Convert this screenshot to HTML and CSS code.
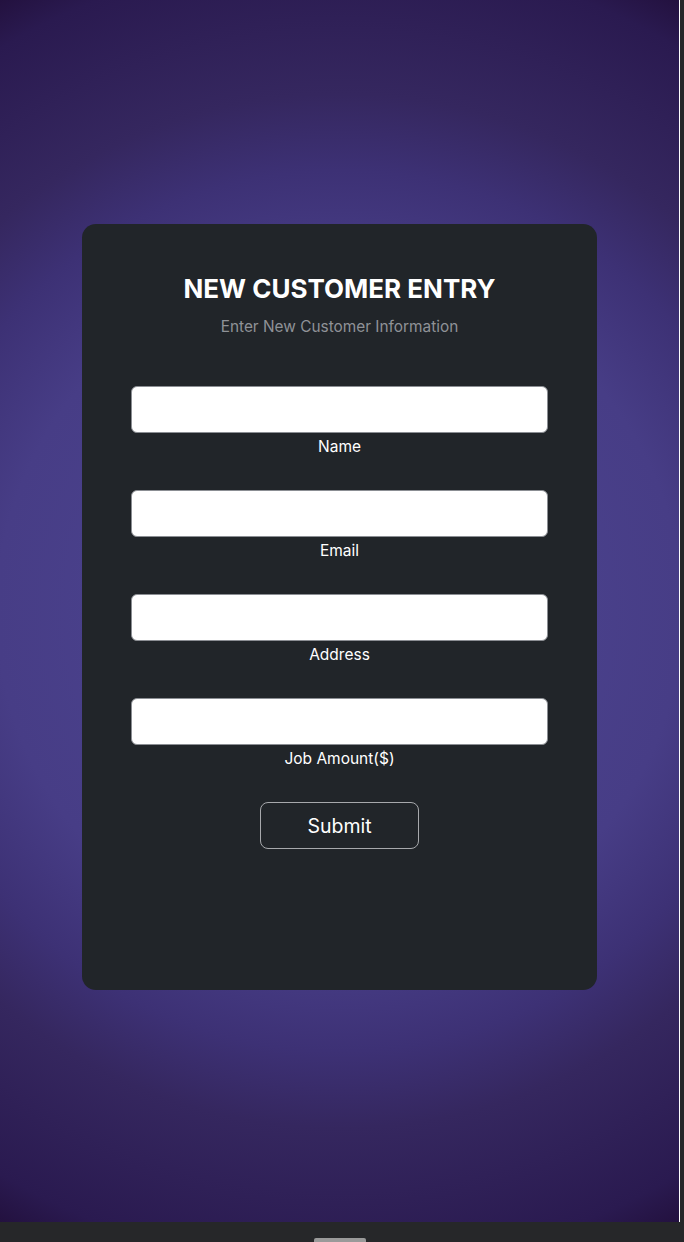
FILE: index.html
```html
<!DOCTYPE html>
<html lang="en">
<head>
<meta charset="utf-8">
<title>New Customer Entry</title>
<link rel="stylesheet" href="styles.css">
</head>
<body>
<div class="window">
  <main class="stage">
    <section class="card">
      <h1 class="title">NEW CUSTOMER ENTRY</h1>
      <p class="subtitle">Enter New Customer Information</p>
      <form class="form">
        <div class="field">
          <input class="input" type="text" id="name">
          <label class="label" for="name">Name</label>
        </div>
        <div class="field">
          <input class="input" type="text" id="email">
          <label class="label" for="email">Email</label>
        </div>
        <div class="field">
          <input class="input" type="text" id="address">
          <label class="label" for="address">Address</label>
        </div>
        <div class="field">
          <input class="input" type="text" id="amount">
          <label class="label" for="amount">Job Amount($)</label>
        </div>
        <button class="submit" type="button">Submit</button>
      </form>
    </section>
  </main>
  <div class="edge"></div>
</div>
<div class="bottombar"><div class="handle"></div></div>
</body>
</html>
```

FILE: styles.css
```css
* { box-sizing: border-box; }
html, body { margin: 0; padding: 0; }
body {
  width: 684px;
  height: 1242px;
  overflow: hidden;
  font-family: Inter, "Noto Sans", "Liberation Sans", sans-serif;
  background: #262729;
  display: flex;
  flex-direction: column;
}
.window {
  height: 1222px;
  display: flex;
}
.stage {
  width: 679px;
  height: 1222px;
  background: radial-gradient(circle at 50% 50%, #4e4795 0%, #473d86 49%, #3d3175 63%, #35275f 74%, #2a1a50 94%, #23113f 100%);
  display: flex;
  justify-content: center;
  padding-top: 224px;
}
.edge {
  width: 5px;
  border-left: 1px solid #ffffff;
  background: #262729;
}
.card {
  width: 515px;
  height: 766px;
  background: #212529;
  border-radius: 14px;
  padding: 48px 49px 0;
  display: flex;
  flex-direction: column;
  align-items: center;
}
.title {
  margin: 0;
  font-size: 26px;
  line-height: 34px;
  font-weight: 700;
  color: #ffffff;
}
.subtitle {
  margin: 9px 0 0;
  font-size: 15.4px;
  line-height: 24px;
  color: #8f9297;
}
.form {
  width: 100%;
  margin-top: 47px;
  display: flex;
  flex-direction: column;
  align-items: center;
  gap: 31px;
}
.field {
  width: 100%;
  display: flex;
  flex-direction: column;
  align-items: center;
}
.input {
  width: 100%;
  height: 47px;
  border: 1.5px solid #8b8e93;
  border-radius: 6px;
  background: #ffffff;
  font: inherit;
  outline: none;
}
.label {
  margin-top: 2px;
  font-size: 15.5px;
  line-height: 24px;
  color: #ffffff;
}
.submit {
  width: 159px;
  height: 47px;
  border: 1px solid #a7a9ac;
  border-radius: 8px;
  background: transparent;
  color: #ffffff;
  font-family: inherit;
  font-size: 19.5px;
  cursor: pointer;
}
.bottombar {
  height: 20px;
  background: #262729;
  position: relative;
}
.handle {
  position: absolute;
  left: 314px;
  bottom: 0;
  width: 52px;
  height: 4px;
  background: #9a9a9a;
  border-radius: 2px 2px 0 0;
}
```
